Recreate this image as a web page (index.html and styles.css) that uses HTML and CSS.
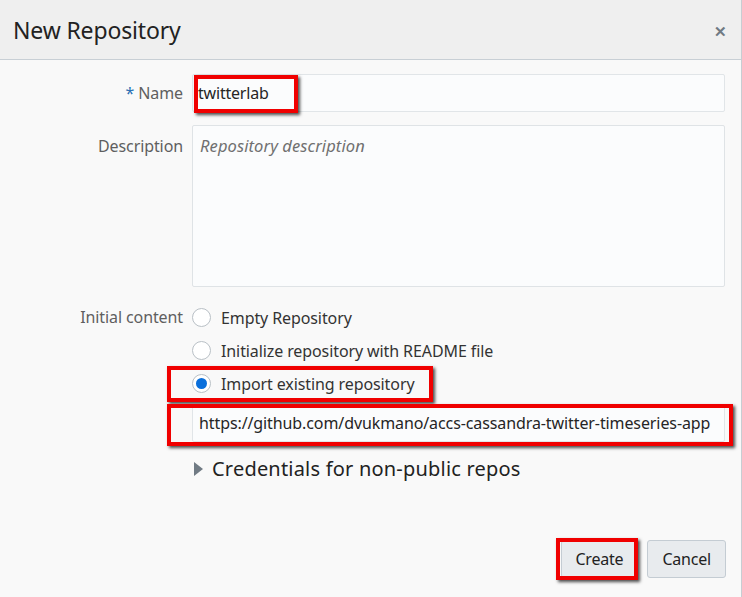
FILE: index.html
```html
<!DOCTYPE html>
<html>
<head>
<meta charset="utf-8">
<link rel="stylesheet" href="styles.css">
</head>
<body>
<div class="dialog">
  <div class="header">
    <h1 class="title">New Repository</h1>
    <span class="close">&#x2715;</span>
  </div>
  <div class="body">
    <div class="row">
      <label class="label"><span class="req">*</span> Name</label>
      <div class="field">
        <div class="input"><span class="value">twitterlab</span></div>
        <div class="mark mark-name"></div>
      </div>
    </div>
    <div class="row">
      <label class="label label-top">Description</label>
      <div class="field">
        <div class="textarea"><span class="placeholder">Repository description</span></div>
      </div>
    </div>
    <div class="row row-radios">
      <label class="label label-radio">Initial content</label>
      <div class="field">
        <div class="radio-row"><span class="radio"></span><span class="rtext">Empty Repository</span></div>
        <div class="radio-row"><span class="radio"></span><span class="rtext">Initialize repository with README file</span></div>
        <div class="radio-row"><span class="radio checked"></span><span class="rtext">Import existing repository</span>
          <div class="mark mark-import"></div>
        </div>
        <div class="url-wrap">
          <div class="input url"><span class="value">https://github.com/dvukmano/accs-cassandra-twitter-timeseries-app</span></div>
          <div class="mark mark-url"></div>
        </div>
        <div class="creds"><span class="tri"></span><span class="ctext">Credentials for non-public repos</span></div>
      </div>
    </div>
    <div class="actions">
      <div class="btn-wrap">
        <button class="btn btn-create">Create</button>
        <div class="mark mark-create"></div>
      </div>
      <button class="btn">Cancel</button>
    </div>
  </div>
</div>
</body>
</html>
```
FILE: styles.css
```css
* { box-sizing: border-box; }
html, body { margin: 0; padding: 0; }
body {
  font-family: "Noto Sans", "Open Sans", sans-serif;
  color: #333;
  background: #f9f9f9;
}
.dialog {
  width: 742px;
  height: 597px;
  border-right: 1px solid #c7cdd2;
  background: #f9f9f9;
  display: flex;
  flex-direction: column;
}
.header {
  height: 60px;
  flex: none;
  background: #efefef;
  border-bottom: 1px solid #c8cfd5;
  display: flex;
  align-items: center;
  justify-content: space-between;
  padding: 0 14px 0 13px;
}
.title {
  margin: 0;
  font-weight: 400;
  font-size: 23px;
  letter-spacing: -0.15px;
  color: #222;
}
.close {
  font-size: 15px;
  font-weight: 700;
  color: #707a83;
  margin-top: 3px;
}
.body {
  flex: 1;
  padding-top: 14px;
  display: flex;
  flex-direction: column;
}
.row {
  display: grid;
  grid-template-columns: 183px 533px;
  column-gap: 9px;
  margin-bottom: 13px;
}
.label {
  text-align: right;
  font-size: 16px;
  color: #5f5f5f;
  line-height: 38px;
  letter-spacing: -0.1px;
}
.label-top { line-height: 42px; }
.label-radio { line-height: 33px; }
.req { color: #2b6fb3; font-size: 16px; }
.field { position: relative; }
.input {
  height: 38px;
  border: 1px solid #e1e5e8;
  border-radius: 2px;
  background: #fbfcfd;
  display: flex;
  align-items: center;
  padding: 0 5px;
  font-size: 16px;
  color: #252525;
}
.value { letter-spacing: -0.2px; }
.textarea {
  height: 162px;
  border: 1px solid #dfe3e6;
  border-radius: 2px;
  background: #fbfcfd;
  padding: 8px 7px;
}
.placeholder {
  font-style: italic;
  font-size: 16.5px;
  color: #707070;
  letter-spacing: 0.1px;
}
.row-radios { margin-top: 1px; }
.radio-row {
  position: relative;
  height: 33px;
  display: flex;
  align-items: center;
  font-size: 16px;
  color: #333;
}
.radio {
  width: 19px;
  height: 19px;
  border: 1px solid #b9c0c6;
  border-radius: 50%;
  background: #fff;
  margin-right: 10px;
  flex: none;
  display: flex;
  align-items: center;
  justify-content: center;
}
.radio.checked::after {
  content: "";
  width: 11px;
  height: 11px;
  border-radius: 50%;
  background: #0a6fdb;
}
.rtext { letter-spacing: -0.1px; }
.url-wrap { position: relative; margin-top: 4px; }
.url { padding-left: 6px; font-size: 16px; }
.url .value { letter-spacing: -0.1px; }
.creds {
  display: flex;
  align-items: center;
  height: 30px;
  margin-top: 11px;
  font-size: 20px;
  color: #222;
}
.tri {
  width: 0;
  height: 0;
  border-top: 7px solid transparent;
  border-bottom: 7px solid transparent;
  border-left: 9px solid #717b84;
  margin: 2px 9px 0 2px;
}
.ctext { letter-spacing: 0.2px; }
.actions {
  margin-top: auto;
  margin-bottom: 19px;
  display: flex;
  justify-content: flex-end;
  gap: 10px;
  padding-right: 15px;
}
.btn-wrap { position: relative; }
.btn {
  height: 38px;
  padding: 0 14px;
  font-family: inherit;
  font-size: 16px;
  color: #222;
  background: #e8ebee;
  border: 1px solid #c4ccd3;
  border-radius: 3px;
  letter-spacing: -0.2px;
}
.btn-create { width: 76px; padding: 0; }
.mark {
  position: absolute;
  border: 4px solid #f00000;
  box-shadow: 2px 2px 3px rgba(0,0,0,0.7);
  pointer-events: none;
}
.mark-name { left: 2px; top: 1px; width: 104px; height: 38px; }
.mark-import { left: -25px; top: -1px; width: 266px; height: 36px; }
.mark-url { left: -25px; top: 0px; width: 566px; height: 42px; }
.mark-create { left: -5px; top: -2px; width: 82px; height: 42px; }
```
